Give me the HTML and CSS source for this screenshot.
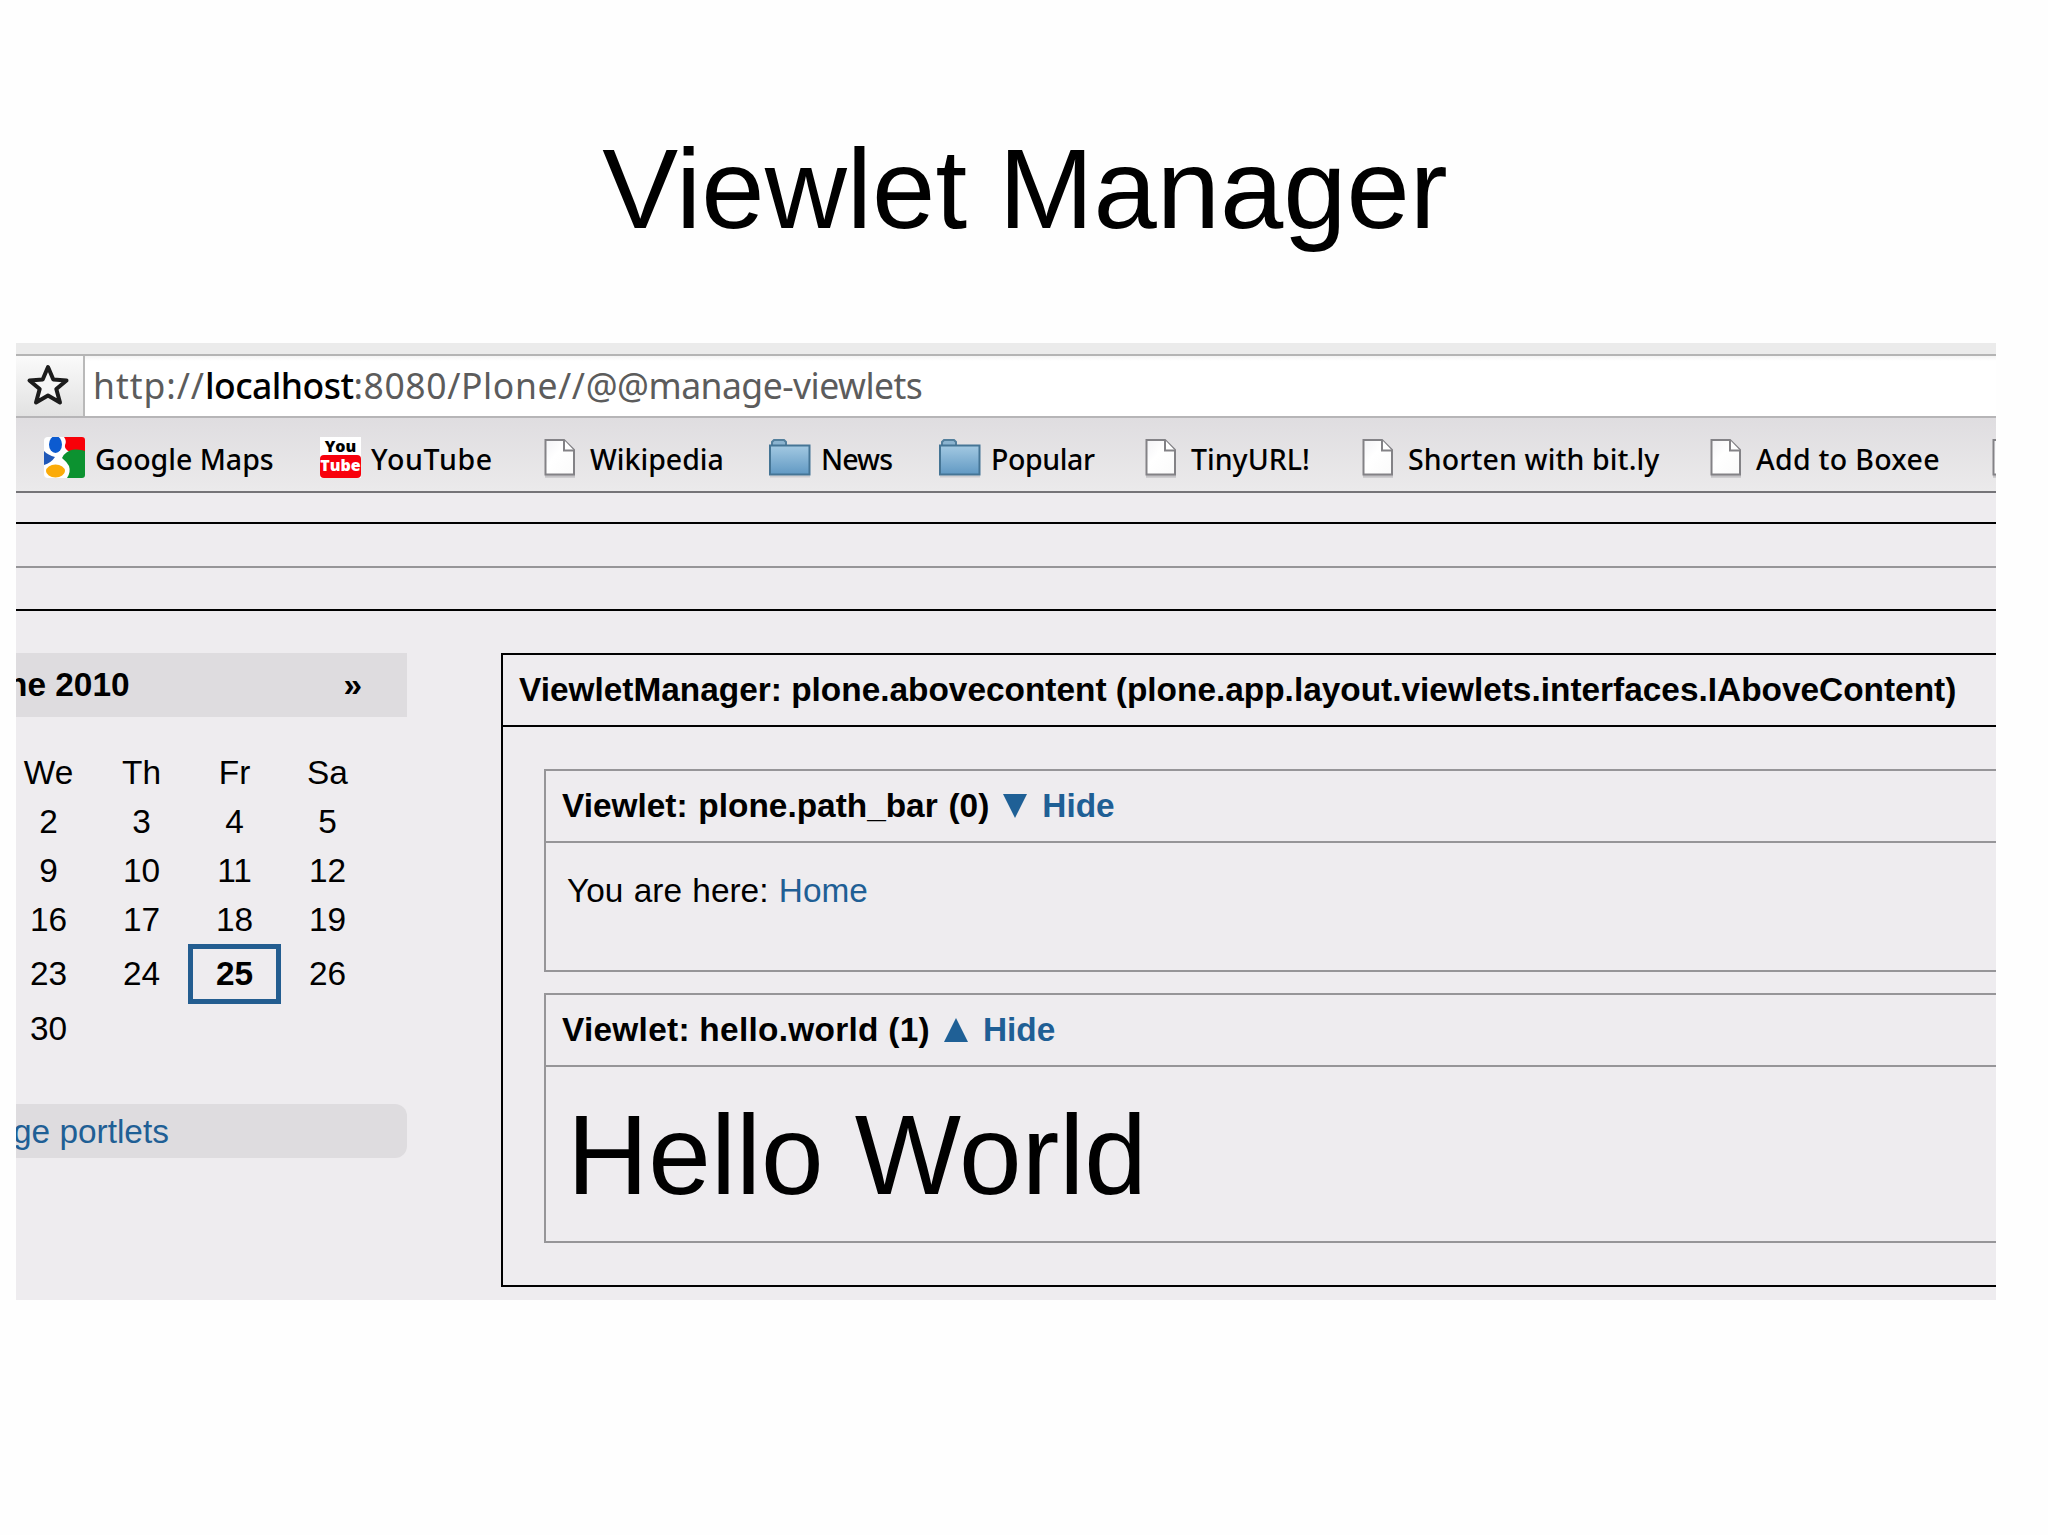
FILE: index.html
```html
<!DOCTYPE html>
<html lang="en">
<head>
<meta charset="utf-8">
<title>Viewlet Manager</title>
<link rel="stylesheet" href="styles.css">
</head>
<body>
<svg class="defs" width="0" height="0">
  <defs>
    <linearGradient id="folder-fill" x1="0" y1="0" x2="0" y2="1"><stop offset="0" stop-color="#a3c9e2"/><stop offset="1" stop-color="#6199c3"/></linearGradient>
    <linearGradient id="page-fill" x1="0" y1="0" x2="1" y2="1"><stop offset="0" stop-color="#f3f3f6"/><stop offset=".4" stop-color="#fff"/><stop offset="1" stop-color="#fafafa"/></linearGradient>
    <symbol id="page" viewBox="0 0 32 40">
      <path d="M1 37.2H31" stroke="#c4c3c6" stroke-width="3"/>
      <path d="M1.5 1H20L30 11V35.5H1.5Z" fill="url(#page-fill)" stroke="#838286" stroke-width="2"/>
      <path d="M20 1V11.5H30" fill="#fff" stroke="#838286" stroke-width="2"/>
    </symbol>
    <symbol id="folder" viewBox="0 0 42 40">
      <path d="M1 37.5H41" stroke="#cfced1" stroke-width="2"/>
      <path d="M3 7V3L5 1H15L17 3V7Z" fill="#8bb3cf" stroke="#537f9c" stroke-width="2"/>
      <path d="M1 6.500H40.500V35.500H1Z" fill="url(#folder-fill)" stroke="#457595" stroke-width="2"/>
    </symbol>
  </defs>
</svg>
<main class="slide">
  <h1 class="title">Viewlet Manager</h1>
  <section class="browser">
    <div class="strip"></div>
    <div class="address">
      <div class="star">
        <svg width="44" height="44" viewBox="0 0 44 44"><path d="M22 4L27.300 16.500L40.500 17.500L30.300 26L34 39.500L22 32.500L10 39.500L13.700 26L3.500 17.500L16.700 16.500Z" fill="#f6f6f6" stroke="#1c1c1c" stroke-width="4" stroke-linejoin="round"/></svg>
      </div>
      <div class="url"><span class="scheme">http://</span><span class="host">localhost</span><span class="path">:8080/Plone//</span><span class="view">@@manage-viewlets</span></div>
    </div>
    <nav class="bookmarks">
      <a class="bookmark b-maps">
        <svg width="41" height="41" viewBox="0 0 41 41">
          <rect x="0" y="0" width="41" height="41" rx="4" fill="#fff"/>
          <path d="M20 0H38Q41 0 41 3V15H26Q20 12 21 8Q23 4 20 0Z" fill="#f80008"/>
          <path d="M41 14V38Q41 41 38 41H23Q27 35 25 29Q23 25 18 21Q21 14 30 12.500Q37 12 41 14Z" fill="#0c9230"/>
          <path d="M0 14Q4 18 11 20Q7 26 0 28Z" fill="#2058b8"/>
          <ellipse cx="11.500" cy="7.500" rx="6.500" ry="8.500" fill="#0c5bd0"/>
          <ellipse cx="11.500" cy="34" rx="9.500" ry="6.500" fill="#fbab08"/>
        </svg><span>Google Maps</span></a>
      <a class="bookmark b-tube"><span class="tube"><b class="you">You</b><b class="tu">Tube</b></span><span>YouTube</span></a>
      <a class="bookmark b-wiki"><svg width="32" height="40"><use href="#page"/></svg><span>Wikipedia</span></a>
      <a class="bookmark b-news"><svg width="42" height="40"><use href="#folder"/></svg><span>News</span></a>
      <a class="bookmark b-pop"><svg width="42" height="40"><use href="#folder"/></svg><span>Popular</span></a>
      <a class="bookmark b-tiny"><svg width="32" height="40"><use href="#page"/></svg><span>TinyURL!</span></a>
      <a class="bookmark b-bitly"><svg width="32" height="40"><use href="#page"/></svg><span>Shorten with bit.ly</span></a>
      <a class="bookmark b-boxee"><svg width="32" height="40"><use href="#page"/></svg><span>Add to Boxee</span></a>
      <a class="bookmark"><svg width="32" height="40"><use href="#page"/></svg></a>
    </nav>
    <div class="managers"><div class="empty-viewlet"></div></div>
    <div class="content">
      <aside class="sidebar">
        <header class="month"><span class="month-name">ne 2010</span><span class="next">»</span></header>
        <div class="calendar">
          <span>We</span><span>Th</span><span>Fr</span><span>Sa</span>
          <span>2</span><span>3</span><span>4</span><span>5</span>
          <span>9</span><span>10</span><span>11</span><span>12</span>
          <span>16</span><span>17</span><span>18</span><span>19</span>
          <span>23</span><span>24</span><span class="today">25</span><span>26</span>
          <span>30</span>
        </div>
        <a class="portlets">ge portlets</a>
      </aside>
      <section class="manager">
        <h2 class="head manager-head">ViewletManager: plone.abovecontent (plone.app.layout.viewlets.interfaces.IAboveContent)</h2>
        <div class="viewlets">
          <article class="viewlet">
            <h3 class="head"><span class="path-bar">Viewlet: plone.path_bar (0)</span><svg class="arrow" width="24" height="24"><path d="M0 0H24L12 24Z" fill="#1f6096"/></svg><a>Hide</a></h3>
            <p class="crumbs">You are here: <a>Home</a></p>
          </article>
          <article class="viewlet">
            <h3 class="head"><span class="hello-world">Viewlet: hello.world (1)</span><svg class="arrow" width="24" height="24"><path d="M0 24H24L12 0Z" fill="#1f6096"/></svg><a>Hide</a></h3>
            <p class="hello">Hello World</p>
          </article>
        </div>
      </section>
    </div>
  </section>
</main>
</body>
</html>
```
FILE: styles.css
```css
* { box-sizing: border-box; }
body { margin: 0; background: #fefefe; color: #000; font: 33.4px/38px "Liberation Sans", Arial, sans-serif; }
h1, h2, h3, p { margin: 0; font-size: inherit; }
.defs { display: block; height: 0; }
.slide { width: 2048px; height: 1535px; overflow: hidden; }
.title { height: 343px; padding: 124px 0 0 2px; text-align: center; font-size: 113.8px; line-height: 130px; font-weight: 400; }
.browser { width: 1980px; height: 957px; margin-left: 16px; overflow: hidden; background: #eeecef; }
.strip { height: 11px; background: #ebebeb; }

.address { display: flex; height: 64px; border-top: 2px solid #b4b4b4; border-bottom: 2px solid #b6b5b7; background: linear-gradient(#f4f4f4, #fff 5px); }
.star { width: 69px; height: 60px; padding: 7px 0 0 10px; border-right: 2px solid #b9b9b9; background: linear-gradient(#fafafa, #e2e2e2); }
.star svg { display: block; }
.url { padding-left: 8px; font: 35.5px/58px "Noto Sans", "Open Sans", sans-serif; color: #5c5c5c; white-space: nowrap; }
.scheme { letter-spacing: .95px; }
.host { color: #000; letter-spacing: -.55px; font-weight: 500; }
.path { letter-spacing: .6px; }
.view { letter-spacing: -.52px; }

.bookmarks { display: grid; grid-template-columns: 276px 224px 225px 170px 206px 217px 348px 282px 40px; height: 75px; padding-left: 28px; border-bottom: 2px solid #757478; background: linear-gradient(#dfdde0, #ebeaeb); font: 500 28.5px/40px "Noto Sans", "Open Sans", sans-serif; white-space: nowrap; }
.bookmark { display: flex; align-items: flex-start; padding-top: 21px; }
.bookmark svg { flex: none; }
.bookmark > span:last-child { margin: 0 0 0 14px; }
.b-maps svg { margin-top: -2px; }
.b-maps > span:last-child, .b-tube > span:last-child, .b-news > span:last-child, .b-pop > span:last-child { margin-left: 10px; }
.b-tube > span:last-child { letter-spacing: .7px; }
.b-news > span:last-child { letter-spacing: -.9px; }
.b-pop > span:last-child { letter-spacing: -.4px; }
.b-bitly > span:last-child { letter-spacing: .12px; }
.b-boxee > span:last-child { letter-spacing: .3px; }
.tube { width: 41px; height: 41px; margin-top: -2px; background: #fff; text-align: center; font: 700 16px/18px "Open Sans", sans-serif; }
.tube b { display: block; }
.tube .tu { height: 23px; border-radius: 4px; background: #f8000c; color: #fff; line-height: 21px; }

.managers { height: 89px; margin-top: 29px; border-top: 2px solid #000; border-bottom: 2px solid #000; }
.empty-viewlet { height: 44px; border-bottom: 2px solid #969598; }

.content { display: flex; padding-top: 42px; }
.sidebar { width: 391px; margin-right: 94px; }
.month { display: flex; justify-content: space-between; height: 64px; padding-right: 45px; background: #dedcdf; font-weight: 700; line-height: 64px; overflow: hidden; }
.month-name { margin-left: -9px; }
.calendar { display: grid; grid-template-columns: 93px 93px 93px 93px; grid-template-rows: 49px 49px 49px 49px 60px 49px; width: 372px; margin: 31px 0 0 -14px; text-align: center; align-items: center; }
.calendar .today { height: 60px; border: 5px solid #235d90; font-weight: 700; line-height: 50px; }
.portlets { display: block; height: 54px; margin-top: 51px; border-radius: 0 12px 12px 0; background: #dedcdf; line-height: 55px; text-indent: -3px; overflow: hidden; }
a { color: #1f5f95; }
.bookmark { color: #000; }

.manager { flex: 1; height: 634px; border: 2px solid #000; border-right: 0; }
.head { display: flex; align-items: center; height: 72px; padding-left: 16px; border-bottom: 2px solid #969598; font-weight: 700; white-space: nowrap; }
.manager-head { border-color: #000; }
.viewlets { display: grid; grid-template-rows: 203px 250px; gap: 21px; padding: 42px 0 0 41px; }
.viewlet { border: 2px solid #969598; border-right: 0; }
.path-bar { word-spacing: 1.5px; }
.hello-world { letter-spacing: .28px; }
.arrow { margin: 0 15px 0 14px; }
.crumbs { padding: 29px 0 0 21px; word-spacing: 1.1px; }
.hello { padding: 23px 0 0 21px; font-size: 112.6px; line-height: 130px; }
```
